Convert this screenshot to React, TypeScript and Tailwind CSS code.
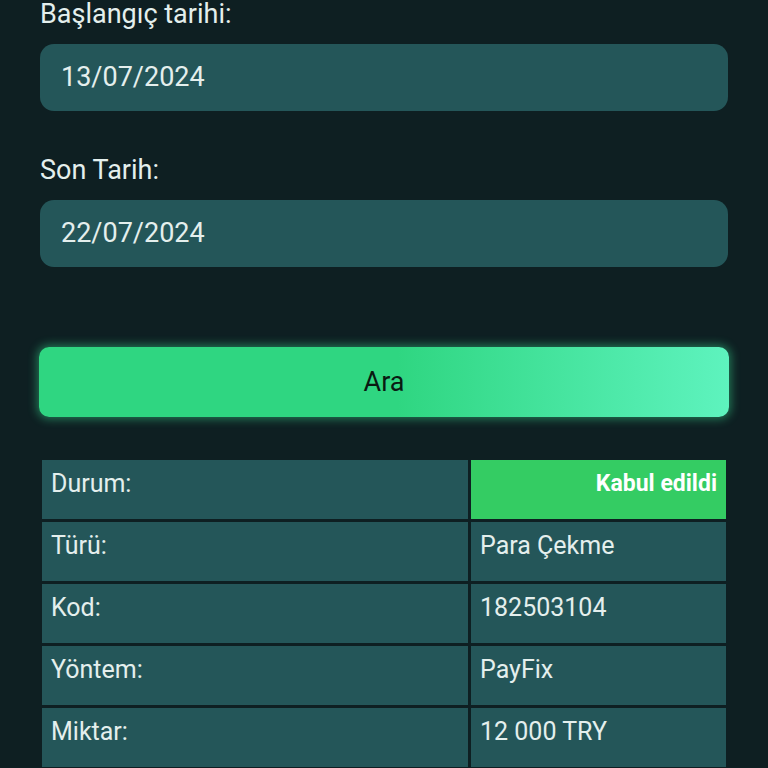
import React from "react";

const rows: [string, string][] = [
  ["Türü:", "Para Çekme"],
  ["Kod:", "182503104"],
  ["Yöntem:", "PayFix"],
  ["Miktar:", "12 000 TRY"],
];

export default function App() {
  return (
    <div
      className="w-[768px] h-[768px] overflow-hidden bg-[#0e1f22] text-[#e4efed]"
      style={{ fontFamily: "Roboto, 'Liberation Sans', sans-serif" }}
    >
      <div className="px-10 flex flex-col">
        <label className="text-[27px] leading-[28px] mb-4">Başlangıç tarihi:</label>
        <div className="h-[67px] rounded-[14px] bg-[#245659] flex items-center pl-[21px] text-[27px]">
          13/07/2024
        </div>
        <label className="text-[27px] leading-[28px] mt-[45px] mb-4">Son Tarih:</label>
        <div className="h-[67px] rounded-[14px] bg-[#245659] flex items-center pl-[21px] text-[27px]">
          22/07/2024
        </div>
        <button className="mt-[80px] -mx-[1px] h-[70px] rounded-[10px] flex items-center justify-center text-[27px] text-[#0a1a12] bg-[linear-gradient(90deg,#2fd681_0%,#2fd681_52%,#5ef3be_100%)] shadow-[0_0_10px_2px_rgba(60,230,150,0.45)]">
          Ara
        </button>
        <div className="mt-[41px] p-[2px] grid grid-cols-[426px_1fr] gap-[3px] text-[25px] leading-[28px]">
          <div className="h-[59px] bg-[#245659] pl-[9px] pt-[10px]">Durum:</div>
          <div className="h-[59px] bg-[#34cc63] pr-[9px] pt-[10px] text-right font-bold text-[23px] text-white">
            Kabul edildi
          </div>
          {rows.map(([k, v]) => (
            <React.Fragment key={k}>
              <div className="h-[59px] bg-[#245659] pl-[9px] pt-[10px]">{k}</div>
              <div className="h-[59px] bg-[#245659] pl-[9px] pt-[10px]">{v}</div>
            </React.Fragment>
          ))}
        </div>
      </div>
    </div>
  );
}
